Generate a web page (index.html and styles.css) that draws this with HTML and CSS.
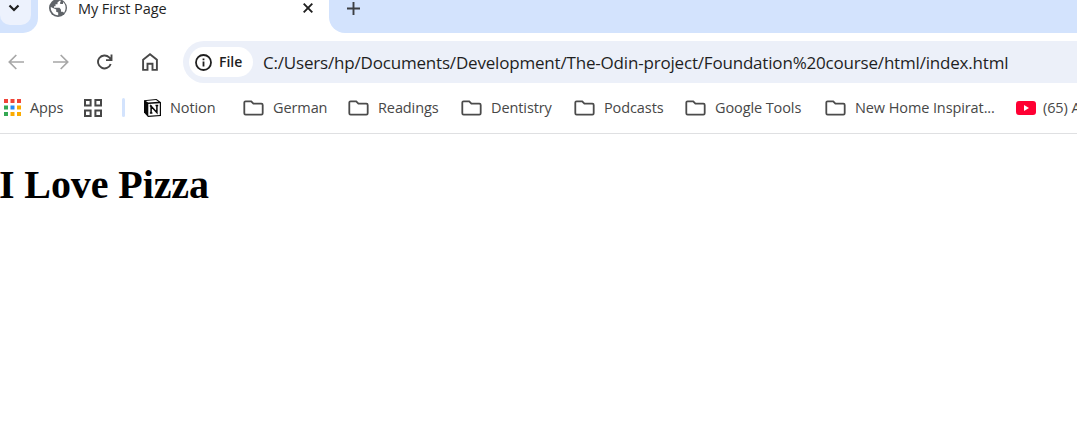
FILE: index.html
```html
<!DOCTYPE html>
<html lang="en">
<head>
<meta charset="utf-8">
<title>My First Page</title>
<link rel="stylesheet" href="styles.css">
</head>
<body>
<svg class="defs" width="0" height="0" aria-hidden="true">
  <symbol id="folder" viewBox="0 0 21 16"><path d="M2.600 1.300h5.600l2.200 2.400h8q1.300 0 1.300 1.300v8.300q0 1.300-1.300 1.300H2.600q-1.300 0-1.300-1.300V2.600q0-1.300 1.300-1.300Z" fill="none" stroke="#4b4b4b" stroke-width="1.800"/></symbol>
</svg>
<header class="tabs">
  <div class="lead"><button class="search" aria-label="Search tabs"><svg width="12" height="8" viewBox="0 0 12 8"><path d="M1.500 1.500 6 6l4.500-4.500" fill="none" stroke="#1f1f1f" stroke-width="2.200"/></svg></button></div>
  <div class="tab">
    <svg class="globe" width="18" height="18" viewBox="0 0 18 18"><circle cx="9" cy="9" r="9" fill="#5f6368"/><path d="M10.500 1.700 8.500 3.500v1.700H6.500v2H5v1.500h5.500l1.500 2v2h1.600l1.500 1c2.500-3.300 1.800-8.600-1.100-10.600v1.800h-2.800V3l1-1.200ZM1.800 8l5.400 2.500v2.300l2 .8v2.700C4.800 16.600 1.300 12 1.800 8Z" fill="#fff"/></svg>
    <span class="title">My First Page</span>
    <svg class="close" width="10" height="10" viewBox="0 0 10 10"><path d="m.7.7 8.600 8.600m0-8.600L.7 9.300" stroke="#1f1f1f" stroke-width="1.900"/></svg>
  </div>
  <div class="rest"><svg width="13" height="13" viewBox="0 0 13 13"><path d="M6.500 0v13M0 6.500h13" stroke="#3c3f43" stroke-width="1.900"/></svg></div>
</header>
<nav class="toolbar">
  <div class="controls">
    <svg width="16" height="16" viewBox="0 0 16 16"><path d="M16 8H1.500M8.300 1 1.300 8l7 7" fill="none" stroke="#a7a7a7" stroke-width="1.700"/></svg>
    <svg width="16" height="16" viewBox="0 0 16 16"><path d="M0 8h14.500M7.700 1l7 7-7 7" fill="none" stroke="#a7a7a7" stroke-width="1.700"/></svg>
    <svg width="16" height="16" viewBox="0 0 16 16"><path d="M13.700 10A6.500 6.500 0 1 1 12.200 3.400L14.200 5.500M14.500 .5v5.600H9" fill="none" stroke="#474747" stroke-width="1.900"/></svg>
    <svg class="home" width="16" height="18" viewBox="0 0 16 18"><path d="M1.100 6.700 8 1.300l6.900 5.400v10.200h-4.400v-6.200h-5v6.200H1.100Z" fill="none" stroke="#474747" stroke-width="1.900"/></svg>
  </div>
  <div class="omnibox">
    <div class="chip"><svg width="17" height="17" viewBox="0 0 17 17"><circle cx="8.500" cy="8.500" r="7.500" fill="none" stroke="#1f1f1f" stroke-width="1.800"/><path d="M8.500 7.400v5M8.500 4.400v1.800" stroke="#1f1f1f" stroke-width="1.800"/></svg><span>File</span></div>
    <span class="url">C:/Users/hp/Documents/Development/The-Odin-project/Foundation%20course/html/index.html</span>
  </div>
</nav>
<nav class="bookmarks">
  <div class="mark apps">
    <svg width="17" height="17" viewBox="0 0 17 17"><path d="M0 0h4v4H0zM6.500 0h4v4h-4zM13 0h4v4h-4z" fill="#f04438"/><path d="M0 6.500h4v4H0zM0 13h4v4H0z" fill="#34a853"/><path d="M6.500 6.500h4v4h-4z" fill="#2589f5"/><path d="M13 6.500h4v4h-4zM6.500 13h4v4h-4zM13 13h4v4h-4z" fill="#fbab00"/></svg><span>Apps</span>
  </div>
  <svg class="grid" width="18" height="18" viewBox="0 0 18 18"><path d="M1 1h5.600v5.600H1zM11.400 1H17v5.600h-5.600zM1 11.400h5.600V17H1zM11.400 11.400H17V17h-5.600z" fill="none" stroke="#474747" stroke-width="2"/></svg>
  <span class="divider"></span>
  <div class="mark notion">
    <svg width="17" height="18" viewBox="0 0 17 18"><path d="M0 1.200 12.500 0 17 3.200V17L4 18l-4-4.500Z" fill="#080808"/><path d="M1.800 1.900 12 1.100l2.500 1.700-10.300.8Z" fill="#fff"/><path d="M4.300 5.100 15.800 4.300v11.600l-11.500.8Z" fill="#fff"/><path d="M7.100 14V7.200l5.800 6.400V6.400M5.800 7h2.100M5.900 14h2.500M11.500 6.600h2.700" fill="none" stroke="#080808" stroke-width="1.500"/></svg><span>Notion</span>
  </div>
  <div class="mark german"><svg class="folder"><use href="#folder"/></svg><span>German</span></div>
  <div class="mark readings"><svg class="folder"><use href="#folder"/></svg><span>Readings</span></div>
  <div class="mark dentistry"><svg class="folder"><use href="#folder"/></svg><span>Dentistry</span></div>
  <div class="mark podcasts"><svg class="folder"><use href="#folder"/></svg><span>Podcasts</span></div>
  <div class="mark google"><svg class="folder"><use href="#folder"/></svg><span>Google Tools</span></div>
  <div class="mark inspiration"><svg class="folder"><use href="#folder"/></svg><span>New Home Inspirat...</span></div>
  <div class="mark video"><svg width="20" height="14" viewBox="0 0 20 14"><rect width="20" height="14" rx="3" fill="#ff0033"/><path d="m8 4 5 3-5 3Z" fill="#fff"/></svg><span>(65) A</span></div>
</nav>
<main><h1>I Love Pizza</h1></main>
</body>
</html>
```
FILE: styles.css
```css
* { box-sizing: border-box; }
body { margin: 0; height: 432px; overflow: hidden; background: #fff; font-family: "Open Sans", "Noto Sans", sans-serif; color: #1f1f1f; }
svg { display: block; flex: none; }
.defs { position: absolute; }
.tabs { display: flex; height: 33px; }
.lead { width: 38px; background: #d3e3fd; border-bottom-right-radius: 15px; }
.search { display: flex; align-items: flex-start; width: 31px; height: 25px; margin: 0; padding: 4px 0 0 8px; border: 0; background: #edf2fd; border-radius: 0 0 10px 10px; }
.tab { display: flex; width: 291px; padding-left: 11px; }
.globe { margin-top: -1px; }
.title { width: 225px; margin-left: 11px; font-size: 14.500px; line-height: 18px; letter-spacing: -.1px; white-space: nowrap; }
.close { margin-top: 3px; }
.rest { flex: 1; padding: 2px 0 0 18px; background: #d3e3fd; border-bottom-left-radius: 16px; }
.toolbar { display: flex; height: 50px; padding-top: 8px; }
.controls { display: flex; align-items: center; width: 183px; padding-left: 8px; gap: 28.700px; }
.home { margin-top: -1px; }
.omnibox { flex: 1; display: flex; align-items: center; padding-left: 6px; background: #ecf0f9; border-radius: 21px 0 0 21px; }
.chip { display: flex; align-items: center; width: 64px; height: 30px; padding-left: 6px; gap: 7px; border-radius: 15px; background: #fff; font-size: 14px; font-weight: 600; letter-spacing: 0; }
.chip span { margin-top: -2px; }
.url { margin-left: 10px; font-size: 17px; letter-spacing: -.187px; white-space: nowrap; }
.bookmarks { display: flex; align-items: center; height: 51px; padding: 0 0 1px 4px; border-bottom: 1px solid #dfe0e2; color: #474747; font-size: 14.500px; white-space: nowrap; }
.mark { display: flex; flex: none; align-items: center; letter-spacing: -.1px; }
.mark span { margin-top: -1px; }
.apps { width: 80px; gap: 9px; }
.divider { flex: none; width: 3px; height: 19px; margin: 0 19px 0 20px; border-radius: 2px; background: #d3e3fd; }
.notion { width: 99px; gap: 9px; }
.folder { width: 21px; height: 16px; margin-right: 9px; }
.german { width: 105px; }
.readings, .dentistry { width: 113px; }
.podcasts { width: 111px; }
.google { width: 140px; }
.inspiration { width: 191px; }
.video { gap: 7px; }
h1 { margin: 27px 0 0 -1px; font: bold 40px/48px "Liberation Serif", serif; letter-spacing: -.1px; color: #000; }
```
